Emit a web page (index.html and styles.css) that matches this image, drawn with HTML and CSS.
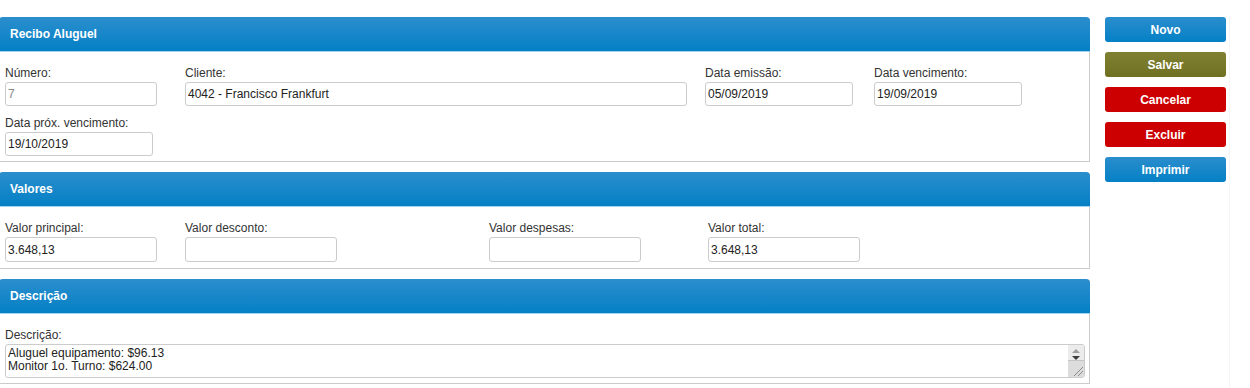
FILE: index.html
```html
<!DOCTYPE html>
<html lang="pt-BR">
<head>
    <meta charset="UTF-8">
    <title>Recibo Aluguel</title>
    <link rel="stylesheet" href="styles.css">
</head>
<body>

    <div class="page">
        <div class="main">

            <!-- Recibo -->
            <div class="panel">
                <div class="panel-header">Recibo Aluguel</div>
                <div class="panel-body">
                    <div class="row">
                        <div class="field w-num">
                            <label for="numero">Número:</label>
                            <input type="text" id="numero" class="in-num readonly" value="7" readonly>
                        </div>
                        <div class="field w-cliente">
                            <label for="cliente">Cliente:</label>
                            <input type="text" id="cliente" class="in-cliente" value="4042 - Francisco Frankfurt">
                        </div>
                        <div class="field w-data">
                            <label for="emissao">Data emissão:</label>
                            <input type="text" id="emissao" class="in-data" value="05/09/2019">
                        </div>
                        <div class="field">
                            <label for="vencimento">Data vencimento:</label>
                            <input type="text" id="vencimento" class="in-data" value="19/09/2019">
                        </div>
                    </div>
                    <div class="row">
                        <div class="field">
                            <label for="proxvenc">Data próx. vencimento:</label>
                            <input type="text" id="proxvenc" class="in-data" value="19/10/2019">
                        </div>
                    </div>
                </div>
            </div>

            <!-- Valores -->
            <div class="panel">
                <div class="panel-header">Valores</div>
                <div class="panel-body body-valores">
                    <div class="row">
                        <div class="field w-num">
                            <label for="principal">Valor principal:</label>
                            <input type="text" id="principal" class="in-num tall" value="3.648,13">
                        </div>
                        <div class="field w-desc">
                            <label for="desconto">Valor desconto:</label>
                            <input type="text" id="desconto" class="in-num tall" value="">
                        </div>
                        <div class="field w-desp">
                            <label for="despesas">Valor despesas:</label>
                            <input type="text" id="despesas" class="in-num tall" value="">
                        </div>
                        <div class="field">
                            <label for="total">Valor total:</label>
                            <input type="text" id="total" class="in-num tall" value="3.648,13">
                        </div>
                    </div>
                </div>
            </div>

            <!-- Descricao -->
            <div class="panel">
                <div class="panel-header">Descrição</div>
                <div class="panel-body">
                    <div class="field">
                        <label for="descricao">Descrição:</label>
                        <div class="text-wrap">
                            <textarea id="descricao" class="in-text">Aluguel equipamento: $96.13
Monitor 1o. Turno: $624.00</textarea>
                            <div class="scroll">
                                <span class="arrow-up"></span>
                                <span class="arrow-down"></span>
                                <span class="grip"></span>
                            </div>
                        </div>
                    </div>
                </div>
            </div>

        </div>

        <!-- Acoes -->
        <div class="sidebar">
            <button class="btn btn-blue">Novo</button>
            <button class="btn btn-olive">Salvar</button>
            <button class="btn btn-red">Cancelar</button>
            <button class="btn btn-red">Excluir</button>
            <button class="btn btn-blue">Imprimir</button>
        </div>
    </div>

</body>
</html>
```

FILE: styles.css
```css
/* General */
body { font-family: "Liberation Sans", Arial, sans-serif; font-size: 12px; color: #333; background-color: #fff; margin: 0; padding: 0; }
.page { display: flex; align-items: flex-start; padding-top: 17px; }
.main { width: 1091px; margin-left: -1px; }

/* Panels */
.panel { border: 1px solid #ccc; border-top: none; border-radius: 4px 4px 0 0; margin-bottom: 10px; }
.panel-header { height: 34px; line-height: 34px; padding-left: 11px; margin: 0 -1px; border-radius: 4px 4px 0 0; border-bottom: 1px solid #a3d2f0; background: linear-gradient(to bottom, #2b8ecd, #0480c5); color: #fff; font-weight: bold; }
.panel-body { padding: 14px 5px 5px 5px; }
.body-valores { padding-bottom: 6px; }

/* Fields */
.row { display: flex; margin-bottom: 10px; }
.row:last-child { margin-bottom: 0; }
.field label { display: block; line-height: 15px; margin-bottom: 1px; }
.w-num { width: 180px; }
.w-cliente { width: 520px; }
.w-data { width: 169px; }
.w-desc { width: 304px; }
.w-desp { width: 219px; }

input, textarea { box-sizing: border-box; font-family: "Liberation Sans", Arial, sans-serif; font-size: 12px; color: #222; border: 1px solid #ccc; border-radius: 3px; padding: 0 2px; margin: 0; outline: none; }
input { height: 24px; }
input.tall { height: 25px; }
.in-num { width: 152px; }
.in-cliente { width: 502px; }
.in-data { width: 148px; }
.readonly { color: #888; }

/* Textarea with drawn scrollbar */
.text-wrap { position: relative; width: 1080px; }
.in-text { display: block; width: 100%; height: 34px; line-height: 13px; padding: 2px 20px 2px 2px; overflow: hidden; resize: none; }
.scroll { position: absolute; top: 1px; right: 1px; bottom: 1px; width: 16px; background: #dcdcdc; border-radius: 0 2px 2px 0; display: flex; flex-direction: column; align-items: center; }
.arrow-up { width: 0; height: 0; margin-top: 4px; border-left: 4px solid transparent; border-right: 4px solid transparent; border-bottom: 4px solid #9e9e9e; }
.arrow-down { width: 0; height: 0; margin-top: 3px; border-left: 4px solid transparent; border-right: 4px solid transparent; border-top: 4px solid #3c3c3c; }
.scroll::before { content: ""; position: absolute; top: 0; left: 0; right: 0; height: 15px; background: #ececec; border-bottom: 1px solid #c4c4c4; }
.scroll span { position: relative; }
.grip { position: absolute !important; right: 1px; bottom: 1px; width: 9px; height: 9px; background: linear-gradient(135deg, transparent 45%, #8a8a8a 45%, #8a8a8a 52%, transparent 52%, transparent 70%, #8a8a8a 70%, #8a8a8a 77%, transparent 77%); }

/* Buttons */
.sidebar { width: 121px; margin-left: 15px; display: flex; flex-direction: column; gap: 10px; padding-right: 3px; border-right: 1px solid #f5f5f5; min-height: 371px; }
.btn { width: 121px; height: 25px; border: none; border-radius: 3px; color: #fff; font-family: "Liberation Sans", Arial, sans-serif; font-size: 12px; font-weight: bold; cursor: pointer; padding: 0; }
.btn-blue { background: linear-gradient(to bottom, #2b8ecd, #0480c5); }
.btn-olive { background: linear-gradient(to bottom, #808032, #6f7121); }
.btn-red { background: #cc0000; }
```
